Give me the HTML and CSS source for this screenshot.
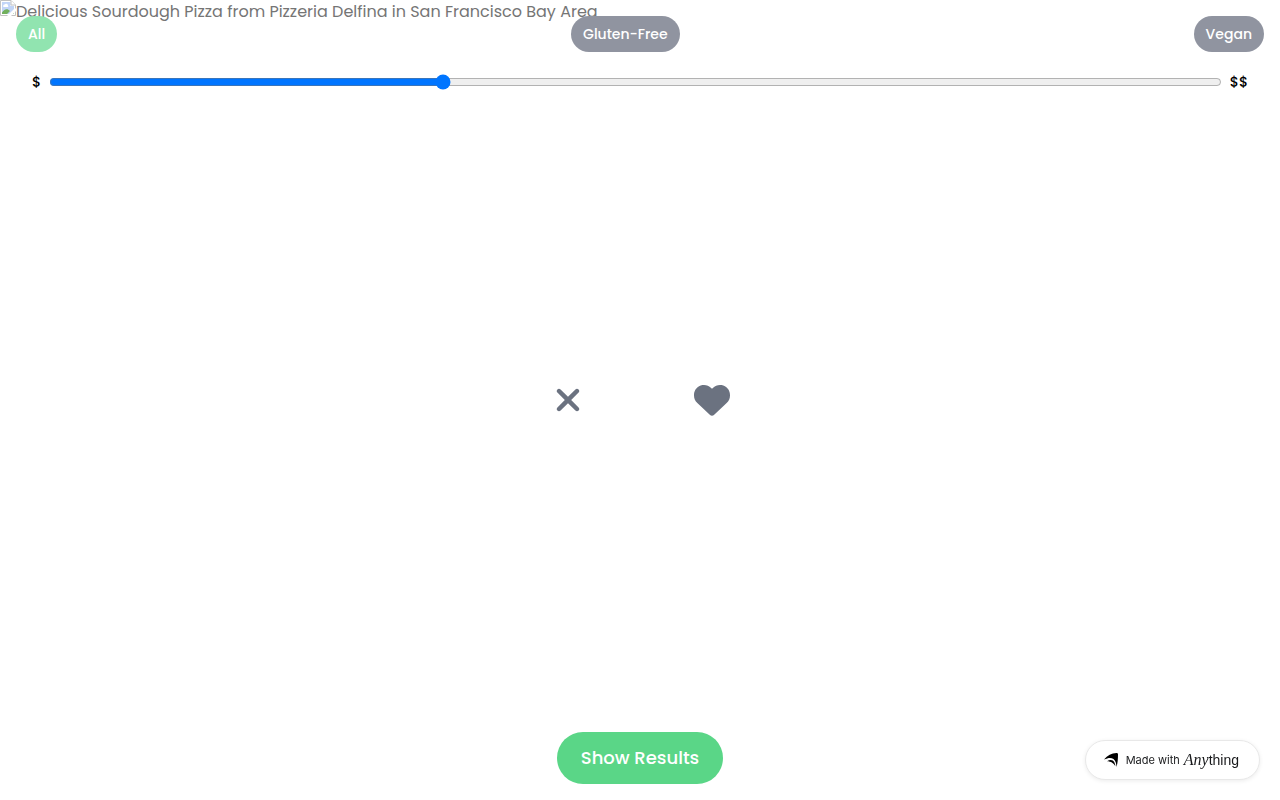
FILE: index.html
```html
<!DOCTYPE html>
<html lang="en">
<head>
  <meta charset="UTF-8">
  <meta name="viewport" content="width=device-width, initial-scale=1">
  <title>Pizza Picker</title>
  <link rel="stylesheet" href="styles.css">
</head>
<body>
  <main class="app">
    <div class="photo">
      <svg class="photo-icon" viewBox="0 0 16 16" aria-hidden="true">
        <path d="M.5 .5H11L15.500 5V15.500H.5z" fill="#fff" stroke="#c2c2c2"/>
        <path d="M2 2H10.500V6H14V9L9 14H2z" fill="#c2d5f7"/>
        <path d="M3.500 7a1.500 1.500 0 0 1 1-2.500 2 2 0 0 1 3.500 1A1 1 0 0 1 8 7z" fill="#fff"/>
        <path d="M2 14v-1.500C5 8.500 7.500 8.500 10 11L7 14zM13 14h1v-2z" fill="#72b05c"/>
        <path d="M11 .5V5h4.500" fill="#fff" stroke="#c2c2c2"/>
        <path d="M7 16L16 8v3l-5 5z" fill="#fff"/>
      </svg>
      <span class="photo-alt">Delicious Sourdough Pizza from Pizzeria Delfina in San Francisco Bay Area</span>
    </div>

    <header class="filters">
      <div class="tags">
        <button type="button" class="tag active">All</button>
        <button type="button" class="tag">Gluten-Free</button>
        <button type="button" class="tag">Vegan</button>
      </div>
      <div class="price">
        <label for="price">$</label>
        <input type="range" id="price" min="1" max="4" value="2">
        <span>$$</span>
      </div>
    </header>

    <div class="votes">
      <button type="button" class="vote" aria-label="Skip">
        <svg viewBox="0 0 384 512" aria-hidden="true">
          <path d="M342.600 150.600c12.500-12.500 12.500-32.800 0-45.300s-32.800-12.500-45.300 0L192 210.700 86.600 105.400c-12.500-12.500-32.800-12.500-45.300 0s-12.500 32.800 0 45.300L146.700 256 41.400 361.400c-12.500 12.500-12.500 32.800 0 45.300s32.800 12.500 45.300 0L192 301.300 297.400 406.600c12.500 12.500 32.800 12.500 45.300 0s12.500-32.800 0-45.300L237.300 256 342.600 150.600z"/>
        </svg>
      </button>
      <button type="button" class="vote" aria-label="Like">
        <svg viewBox="0 0 512 512" aria-hidden="true">
          <path d="M47.600 300.400L228.300 469.100c7.500 7 17.400 10.900 27.700 10.900s20.200-3.900 27.700-10.900L464.400 300.400c30.400-28.300 47.600-68 47.600-109.500v-5.800c0-69.900-50.500-129.500-119.400-141C347 36.500 300.600 51.400 268 84L256 96 244 84c-32.600-32.600-79-47.500-124.600-39.900C50.500 55.600 0 115.200 0 185.100v5.800c0 41.500 17.200 81.200 47.600 109.500z"/>
        </svg>
      </button>
    </div>

    <footer class="results">
      <button type="button" class="show">Show Results</button>
    </footer>
  </main>

  <a href="#" class="badge">
    <svg viewBox="0 0 14 14" aria-hidden="true">
      <path d="M0 6.500C3.500 2.500 7.500 .3 12.500 0 13.500 0 14 .5 14 1.500 14 6 13.700 10 12.500 14 12.400 10.500 11.500 7.500 9.500 6 7 4.300 4 4.800 0 6.500z"/>
      <path d="M3 8.300C6 6.300 9 6.700 10.300 9.300c.7 1.300 1 2.500 1 4C10 10.500 7 8.300 3 8.300z"/>
    </svg>
    <span>Made with</span>
    <span class="brand"><i>Any</i>thing</span>
  </a>
</body>
</html>
```

FILE: styles.css
```css
* {
  box-sizing: border-box;
}
body {
  margin: 0;
  font-family: Poppins, 'Open Sans', sans-serif;
  font-size: 16px;
  line-height: 24px;
  color: #000;
  background: #fff;
}
button {
  border: none;
  font-family: inherit;
  cursor: pointer;
}
.app {
  position: relative;
  min-height: 100vh;
  display: flex;
  flex-direction: column;
}
/* the photo lies behind all the controls */
.photo {
  position: absolute;
  inset: 0;
  display: flex;
  align-items: flex-start;
  overflow: hidden;
  color: #757575;
}
.photo-icon {
  width: 16px;
  height: 16px;
  flex: none;
}
.filters,
.votes,
.results {
  position: relative;
}
.filters {
  padding: 16px;
}
.tags {
  display: flex;
  justify-content: space-between;
}
.tag {
  padding: 8px 12px;
  border-radius: 18px;
  background: #9094a0;
  color: #fff;
  font-size: 14px;
  font-weight: 500;
  line-height: 20px;
}
.tag.active {
  background: #91e4b0;
}
.price {
  display: flex;
  align-items: center;
  gap: 8px;
  padding: 20px 16px 0;
  font-size: 14px;
  font-weight: 500;
  line-height: 20px;
}
.price input {
  flex: 1;
  min-width: 0;
  height: 16px;
  margin: 0;
}
.votes {
  position: absolute;
  inset: 0;
  display: flex;
  align-items: center;
  justify-content: center;
  gap: 108px;
  pointer-events: none;
}
.vote {
  width: 36px;
  height: 36px;
  padding: 0;
  background: none;
  pointer-events: auto;
}
.vote svg {
  display: block;
  width: 100%;
  height: 100%;
  fill: #6b7280;
}
.results {
  margin-top: auto;
  padding: 16px;
  text-align: center;
}
.show {
  display: inline-block;
  vertical-align: top;
  padding: 12px 24px;
  border-radius: 26px;
  background: #5ad687;
  color: #fff;
  font-size: 18px;
  font-weight: 500;
  line-height: 28px;
}
.badge {
  position: fixed;
  right: 20px;
  bottom: 20px;
  display: flex;
  align-items: center;
  gap: 4px;
  height: 40px;
  padding: 0 20px 0 18px;
  border: 1px solid #e8e8e8;
  border-radius: 20px;
  background: #fff;
  box-shadow: 0 1px 4px rgba(0, 0, 0, 0.08);
  color: #18191b;
  font-family: Inter, 'Liberation Sans', sans-serif;
  font-size: 11px;
  text-decoration: none;
}
.badge svg {
  width: 14px;
  height: 14px;
  margin-right: 4px;
}
.brand {
  font-family: 'Liberation Sans', Arial, sans-serif;
  font-size: 14px;
}
.brand i {
  font-family: 'Liberation Serif', 'Times New Roman', serif;
  font-size: 16px;
}
```
